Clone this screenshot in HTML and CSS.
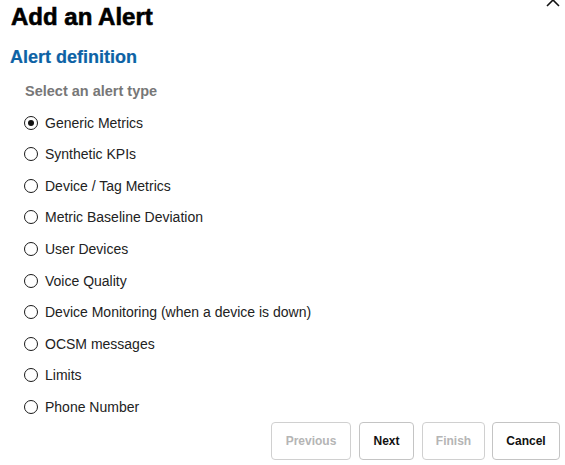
FILE: index.html
```html
<!DOCTYPE html>
<html>
<head>
<meta charset="utf-8">
<link rel="stylesheet" href="styles.css">
</head>
<body>
<div class="dialog">
  <button class="close" aria-label="Close">
    <svg width="14" height="14" viewBox="0 0 14 14"><path d="M1 1 L13 13 M13 1 L1 13" stroke="#111" stroke-width="1.6" fill="none"/></svg>
  </button>
  <h1 class="title">Add an Alert</h1>
  <h2 class="section">Alert definition</h2>
  <div class="group">
    <div class="legend">Select an alert type</div>
    <ul class="options">
      <li class="option"><span class="radio checked"></span><span class="label">Generic Metrics</span></li>
      <li class="option"><span class="radio"></span><span class="label">Synthetic KPIs</span></li>
      <li class="option"><span class="radio"></span><span class="label">Device / Tag Metrics</span></li>
      <li class="option"><span class="radio"></span><span class="label">Metric Baseline Deviation</span></li>
      <li class="option"><span class="radio"></span><span class="label">User Devices</span></li>
      <li class="option"><span class="radio"></span><span class="label">Voice Quality</span></li>
      <li class="option"><span class="radio"></span><span class="label">Device Monitoring (when a device is down)</span></li>
      <li class="option"><span class="radio"></span><span class="label">OCSM messages</span></li>
      <li class="option"><span class="radio"></span><span class="label">Limits</span></li>
      <li class="option"><span class="radio"></span><span class="label">Phone Number</span></li>
    </ul>
  </div>
  <div class="actions">
    <button class="btn btn-prev" disabled>Previous</button>
    <button class="btn btn-next">Next</button>
    <button class="btn btn-finish" disabled>Finish</button>
    <button class="btn btn-cancel">Cancel</button>
  </div>
</div>
</body>
</html>
```
FILE: styles.css
```css
html, body {
  margin: 0;
  padding: 0;
  background: #fff;
}
body {
  font-family: "Liberation Sans", Arial, sans-serif;
  color: #222;
  width: 565px;
  height: 465px;
  overflow: hidden;
}
.dialog {
  position: relative;
  padding: 3px 5px 0 10px;
}
.close {
  position: absolute;
  top: -7px;
  right: 5px;
  width: 14px;
  height: 14px;
  padding: 0;
  border: 0;
  background: none;
}
.close svg {
  display: block;
}
.title {
  margin: 0;
  padding-left: 1px;
  font-size: 24px;
  line-height: 28px;
  font-weight: bold;
  color: #000;
  -webkit-text-stroke: 0.6px #000;
}
.section {
  margin: 15px 0 0;
  font-size: 18px;
  line-height: 22px;
  font-weight: bold;
  color: #0d62a5;
  -webkit-text-stroke: 0.2px #0d62a5;
}
.group {
  margin-top: 14px;
  padding-left: 14px;
}
.legend {
  padding-left: 1px;
  font-size: 14.5px;
  line-height: 18px;
  font-weight: bold;
  color: #777;
}
.options {
  list-style: none;
  margin: 7px 0 0;
  padding: 0;
}
.option {
  display: flex;
  align-items: center;
  height: 31.55px;
  font-size: 14px;
}
.radio {
  box-sizing: border-box;
  width: 14px;
  height: 14px;
  border: 1.7px solid #1a1a1a;
  border-radius: 50%;
  margin-left: -0.5px;
  margin-right: 7.5px;
  display: flex;
  align-items: center;
  justify-content: center;
}
.radio.checked::after {
  content: "";
  width: 6px;
  height: 6px;
  border-radius: 50%;
  background: #111;
}
.label {
  color: #222;
}
.actions {
  display: flex;
  justify-content: flex-end;
  gap: 8px;
}
.btn {
  box-sizing: border-box;
  height: 38px;
  padding: 0;
  border: 1px solid #c4c4c4;
  border-radius: 4px;
  background: #fff;
  font-family: "Liberation Sans", Arial, sans-serif;
  font-size: 12px;
  font-weight: bold;
  color: #111;
}
.btn:disabled {
  color: #b5b5b5;
  border-color: #d0d0d0;
}
.btn-prev { width: 80px; }
.btn-next { width: 55px; }
.btn-finish { width: 63px; }
.btn-cancel { width: 68px; margin-left: -1px; }
```
